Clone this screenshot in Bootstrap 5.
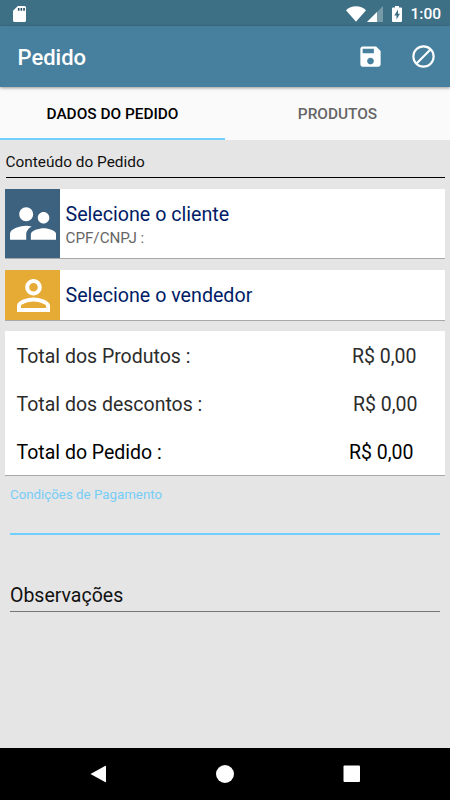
<!DOCTYPE html>
<html lang="pt-BR">
<head>
<meta charset="utf-8">
<meta name="viewport" content="width=device-width, initial-scale=1">
<title>Pedido</title>
<link href="https://cdn.jsdelivr.net/npm/bootstrap@5.3.0/dist/css/bootstrap.min.css" rel="stylesheet">
<style>
html, body { height: 100%; }
body { font-family: Roboto, sans-serif; background: #e5e5e5; color: #111; line-height: 1; overflow: hidden; }
svg { display: block; flex: none; fill: #fff; }
.screen { width: 450px; height: 800px; }
.statusbar { height: 26px; background: #3d6f85; padding: 1px 9px 0 13px; }
.signal { margin-left: 1px; }
.battery { margin-left: 9px; }
.clock { font-size: 15.5px; font-weight: 500; color: #fff; margin-left: 8px; padding-top: 2px; }
.appbar { height: 61px; background: #47809e; padding: 0 13px 0 17.5px; box-shadow: 0 1px 3px rgba(0,0,0,.4); z-index: 1; }
.title { font-size: 22px; font-weight: 500; color: #fff; padding-top: 3px; }
.icon-button { background: none; border: 0; padding: 0; }
.icon-button + .icon-button { margin-left: 26px; }
.tabs { height: 53px; background: #fafafa; }
.tabs .nav-link { height: 53px; padding: 4px 0 0; font-size: 15.4px; font-weight: 500; color: #656565; border-bottom: 2px solid transparent; border-radius: 0; }
.tabs .nav-link.active { color: #000; border-color: #70cffb; }
.section-title { font-size: 15.4px; margin: 0 5.5px; height: 38px; padding-top: 15px; border-bottom: 1px solid #000; }
.panel { margin: 11px 5px 0; background: #fff; box-shadow: 0 1px 0 #a8a8a8; }
.panel-client { height: 69px; }
.panel-seller { height: 50px; margin-top: 12px; }
.panel-text { padding: 2px 0 0 5.5px; }
.panel-client .panel-text { padding-top: 4px; }
.tile { width: 55px; padding-left: 1px; }
.tile-client { background: #3d627f; }
.tile-seller { background: #e6ab34; }
.pick { font-size: 19.65px; color: #001c66; }
.doc { font-size: 15.2px; color: #666; margin-top: 6px; }
.total-row { height: 48px; font-size: 19.5px; color: #2c2c2c; padding: 3px 28.5px 0 11.5px; }
.total-row.second { padding-right: 27.5px; }
.total-row.grand { padding-right: 31.5px; color: #000; }
.terms { margin: 13px 10px 0; height: 47px; border-bottom: 2px solid #70cffb; color: #76cdf7; font-size: 13.3px; }
.notes { margin: 50px 10px 0; height: 27px; padding-top: 1px; border-bottom: 1px solid #777; font-size: 19.5px; color: #111; }
.navkeys { height: 52px; background: #000; }
</style>
<script src="https://cdn.jsdelivr.net/npm/bootstrap@5.3.0/dist/js/bootstrap.bundle.min.js"></script>
</head>
<body>
<div class="screen d-flex flex-column">
  <div class="statusbar d-flex align-items-center">
    <svg width="13" height="16" viewBox="4 2 16 20" preserveAspectRatio="none"><path d="M18 2h-8L4 8v12c0 1.100.9 2 2 2h12c1.100 0 2-.9 2-2V4c0-1.100-.9-2-2-2z"/><path fill="#244f66" d="M10 4.500h2V8h-2zM13.300 4.500h2V8h-2zM16.600 4.500h2V8h-2z"/></svg>
    <svg class="ms-auto" width="20" height="16" viewBox="0 0 20 16"><path d="M0 4.300Q4 .3 10 .3t10 4L10 15.800z"/></svg>
    <svg class="signal" width="16" height="16" viewBox="0 0 16 16"><path fill-opacity=".3" d="M0 16 16 0V16z"/><path d="M0 16 10 6V16z"/></svg>
    <svg class="battery" width="10" height="16" viewBox="0 0 10 16"><path d="M3 0H7V1.500H9Q10 1.500 10 2.500V15Q10 16 9 16H1Q0 16 0 15V2.500Q0 1.500 1 1.500H3z"/><path fill="#3d6f85" d="M6 3.500 2.300 9.500H4.500V13.500L8 7.800H6z"/></svg>
    <span class="clock">1:00</span>
  </div>
  <header class="appbar d-flex align-items-center position-relative">
    <h1 class="title m-0">Pedido</h1>
    <button class="icon-button ms-auto" aria-label="Salvar"><svg width="27" height="27" viewBox="0 0 24 24"><path d="M17 3H5c-1.110 0-2 .9-2 2v14c0 1.100.89 2 2 2h14c1.100 0 2-.9 2-2V7l-4-4zm-5 16c-1.660 0-3-1.340-3-3s1.340-3 3-3 3 1.340 3 3-1.340 3-3 3zm3-10H5V5h10v4z"/></svg></button>
    <button class="icon-button" aria-label="Cancelar"><svg width="27" height="27" viewBox="0 0 24 24"><g fill="none" stroke="#fff" stroke-width="1.900"><circle cx="12" cy="12" r="9"/><path d="M5.600 18.400 18.400 5.600"/></g></svg></button>
  </header>
  <nav class="tabs nav nav-fill flex-nowrap">
    <a class="nav-link active w-50 d-flex align-items-center justify-content-center" href="#">DADOS DO PEDIDO</a>
    <a class="nav-link w-50 d-flex align-items-center justify-content-center" href="#">PRODUTOS</a>
  </nav>
  <main class="flex-grow-1">
    <div class="section-title">Conteúdo do Pedido</div>
    <div class="panel panel-client d-flex">
      <div class="tile tile-client d-flex align-items-center justify-content-center"><svg width="46.300" height="33" viewBox="2 5 20 14"><path d="M16.500 12c1.380 0 2.490-1.120 2.490-2.500S17.880 7 16.500 7 14 8.120 14 9.500s1.120 2.500 2.500 2.500zM9 11c1.660 0 2.990-1.340 2.990-3S10.660 5 9 5 6 6.340 6 8s1.340 3 3 3zm7.500 3c-1.830 0-5.500.92-5.500 2.750V19h11v-2.250c0-1.830-3.670-2.750-5.500-2.750zM9 13c-2.330 0-7 1.170-7 3.500V19h7v-2.250c0-.85.33-2.340 2.370-3.470C10.500 13.100 9.660 13 9 13z"/></svg></div>
      <div class="panel-text d-flex flex-column justify-content-center"><div class="pick">Selecione o cliente</div><div class="doc">CPF/CNPJ :</div></div>
    </div>
    <div class="panel panel-seller d-flex">
      <div class="tile tile-seller d-flex align-items-center justify-content-center"><svg width="33" height="33" viewBox="4 4 16 16"><path d="M12 5.900c1.160 0 2.100.94 2.100 2.100s-.94 2.100-2.100 2.100S9.900 9.160 9.900 8s.94-2.100 2.100-2.100m0 9c2.970 0 6.100 1.460 6.100 2.100v1.100H5.900V17c0-.64 3.130-2.100 6.100-2.100M12 4C9.790 4 8 5.790 8 8s1.790 4 4 4 4-1.790 4-4-1.790-4-4-4zm0 9c-2.670 0-8 1.340-8 4v3h16v-3c0-2.660-5.330-4-8-4z"/></svg></div>
      <div class="panel-text pick d-flex align-items-center">Selecione o vendedor</div>
    </div>
    <div class="panel">
      <div class="total-row d-flex align-items-center justify-content-between"><span>Total dos Produtos :</span><span>R$ 0,00</span></div>
      <div class="total-row second d-flex align-items-center justify-content-between"><span>Total dos descontos :</span><span>R$ 0,00</span></div>
      <div class="total-row grand d-flex align-items-center justify-content-between"><span>Total do Pedido :</span><span>R$ 0,00</span></div>
    </div>
    <div class="terms">Condições de Pagamento</div>
    <div class="notes">Observações</div>
  </main>
  <footer class="navkeys">
    <svg width="450" height="52" viewBox="0 0 450 52"><path d="M90.500 26 105 18Q106 17.500 106 18.500V33.500Q106 34.500 105 34z"/><circle cx="225" cy="26" r="9"/><rect x="343.500" y="17.500" width="16.500" height="16.500" rx="1"/></svg>
  </footer>
</div>
</body>
</html>
